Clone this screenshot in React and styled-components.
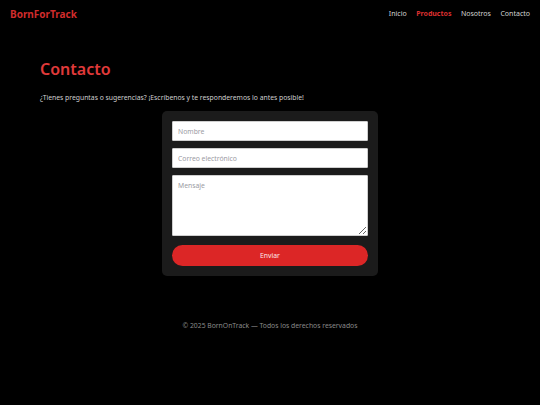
import React from 'react'
import styled, { createGlobalStyle } from 'styled-components'

const GlobalStyle = createGlobalStyle`
  html, body {
    margin: 0;
    padding: 0;
    background: #000;
  }
  body {
    font-family: "Noto Sans", "Open Sans", sans-serif;
    color: #ddd;
  }
  * {
    box-sizing: border-box;
  }
`

const Page = styled.div`
  min-height: 405px;
  background: #000;
  display: flex;
  flex-direction: column;
`

const Header = styled.header`
  display: flex;
  align-items: center;
  justify-content: space-between;
  height: 27px;
  padding: 0 10px;
`

const Logo = styled.a`
  color: #d02c2c;
  font-size: 10px;
  font-weight: 700;
  text-decoration: none;
`

const Nav = styled.nav`
  display: flex;
  gap: 9.5px;
`

const NavLink = styled.a`
  font-size: 7px;
  text-decoration: none;
  color: ${({ active }) => (active ? '#dc2f2f' : '#d4d4d4')};
  font-weight: ${({ active }) => (active ? 700 : 400)};
`

const Main = styled.main`
  padding: 31px 40px 0;
`

const Title = styled.h1`
  margin: 0;
  color: #e03a3a;
  font-size: 16px;
  font-weight: 600;
  line-height: 22px;
`

const Intro = styled.p`
  margin: 13px 0 0;
  font-size: 6.8px;
  color: #d0d0d0;
`

const Card = styled.form`
  width: 216px;
  margin: 9px auto 0;
  padding: 10px;
  background: #1b1b1b;
  border-radius: 5px;
  display: flex;
  flex-direction: column;
  gap: 7px;
`

const Field = styled.input`
  width: 100%;
  height: 20px;
  padding: 0 5px;
  border: 1px solid #cfcfcf;
  border-radius: 1px;
  background: #fff;
  font-family: inherit;
  font-size: 6.8px;
  outline: none;

  &::placeholder {
    color: #9a9aa2;
  }
`

const Message = styled.textarea`
  width: 100%;
  height: 61px;
  padding: 5px;
  border: 1px solid #cfcfcf;
  border-radius: 1px;
  background: #fff;
  font-family: inherit;
  font-size: 6.8px;
  resize: vertical;
  outline: none;
  display: block;

  &::placeholder {
    color: #9a9aa2;
  }
`

const Send = styled.button`
  margin-top: 2px;
  height: 21px;
  border: none;
  border-radius: 11px;
  background: #dc2626;
  color: #fde8e8;
  font-family: inherit;
  font-size: 6.8px;
  cursor: pointer;
`

const Footer = styled.footer`
  margin-top: 45px;
  text-align: center;
  font-size: 6.8px;
  color: #8a8a8a;
`

const App = () =>
{
  return (
    <Page>
      <GlobalStyle />
      <Header>
        <Logo href='#'>BornForTrack</Logo>
        <Nav>
          <NavLink href='#'>Inicio</NavLink>
          <NavLink href='#' active>Productos</NavLink>
          <NavLink href='#'>Nosotros</NavLink>
          <NavLink href='#'>Contacto</NavLink>
        </Nav>
      </Header>
      <Main>
        <Title>Contacto</Title>
        <Intro>¿Tienes preguntas o sugerencias? ¡Escríbenos y te responderemos lo antes posible!</Intro>
        <Card onSubmit={ e => e.preventDefault() }>
          <Field type='text' placeholder='Nombre' />
          <Field type='email' placeholder='Correo electrónico' />
          <Message placeholder='Mensaje' />
          <Send type='submit'>Enviar</Send>
        </Card>
      </Main>
      <Footer>© 2025 BornOnTrack — Todos los derechos reservados</Footer>
    </Page>
  )
}

export default App
